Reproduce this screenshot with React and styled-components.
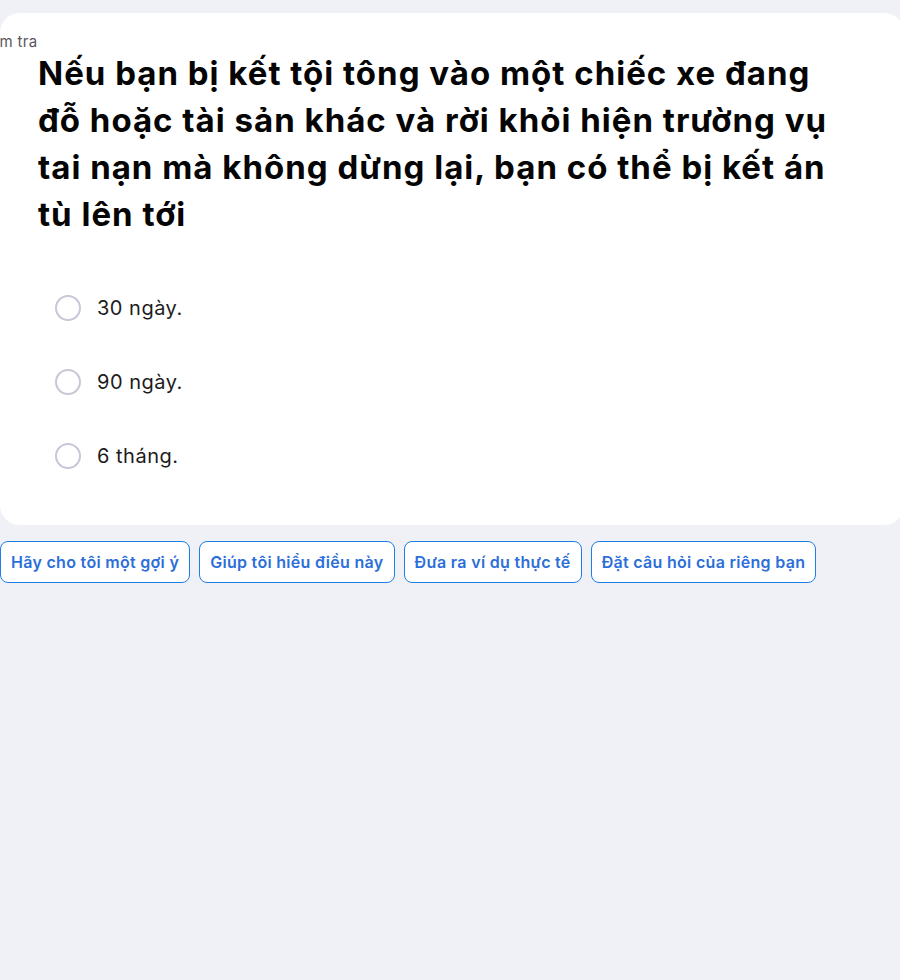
import React from 'react'
import styled, { createGlobalStyle } from 'styled-components'

const GlobalStyle = createGlobalStyle`
html, body {
margin: 0;
padding: 0;
background: #f0f1f6;
overflow: hidden;
}
body {
font-family: Inter, "Noto Sans", "Liberation Sans", sans-serif;
}
`

const Page = styled.div`
width: 900px;
height: 980px;
padding-top: 13px;
box-sizing: border-box;
display: flex;
flex-direction: column;
gap: 16px;
`

const Card = styled.div`
width: 904px;
height: 512px;
background: #ffffff;
border-radius: 20px;
padding: 20px 46px 0 38px;
box-sizing: border-box;
`

const Label = styled.div`
margin-left: -62px;
font-size: 15px;
color: #5a5660;
line-height: 18px;
letter-spacing: 0.3px;
`

const Question = styled.h1`
margin: -1px 0 0;
font-size: 33px;
font-weight: 700;
line-height: 47px;
color: #050505;
letter-spacing: 1px;
`

const Options = styled.div`
margin-top: 57px;
padding-left: 17px;
display: flex;
flex-direction: column;
gap: 48px;
`

const Option = styled.label`
display: flex;
align-items: center;
gap: 16px;
font-size: 20px;
letter-spacing: 0.5px;
color: #1c1c1c;
height: 26px;
`

const Radio = styled.span`
width: 26px;
height: 26px;
box-sizing: border-box;
border-radius: 50%;
border: 2px solid #c8c7d6;
`

const Actions = styled.div`
display: flex;
gap: 9px;
`

const ActionButton = styled.button`
height: 42px;
padding: 0 10px;
background: #ffffff;
border: 1px solid #1f7ee6;
border-radius: 8px;
color: #2c6fd9;
font-family: Inter, "Noto Sans", "Liberation Sans", sans-serif;
font-size: 16px;
font-weight: 600;
letter-spacing: 0.3px;
cursor: pointer;
`

const answers = ['30 ngày.', '90 ngày.', '6 tháng.']
const prompts = [
    'Hãy cho tôi một gợi ý',
    'Giúp tôi hiểu điều này',
    'Đưa ra ví dụ thực tế',
    'Đặt câu hỏi của riêng bạn',
]

function App() {
    return (
        <Page>
            <GlobalStyle />
            <Card>
                <Label>Kiểm tra</Label>
                <Question>
                    Nếu bạn bị kết tội tông vào một chiếc xe đang đỗ hoặc tài sản khác và rời khỏi hiện trường vụ tai nạn mà không dừng lại, bạn có thể bị kết án tù lên tới
                </Question>
                <Options>
                    {answers.map((a) => (
                        <Option key={a}>
                            <Radio />
                            {a}
                        </Option>
                    ))}
                </Options>
            </Card>
            <Actions>
                {prompts.map((p) => (
                    <ActionButton key={p}>{p}</ActionButton>
                ))}
            </Actions>
        </Page>
    )
}

export default App
